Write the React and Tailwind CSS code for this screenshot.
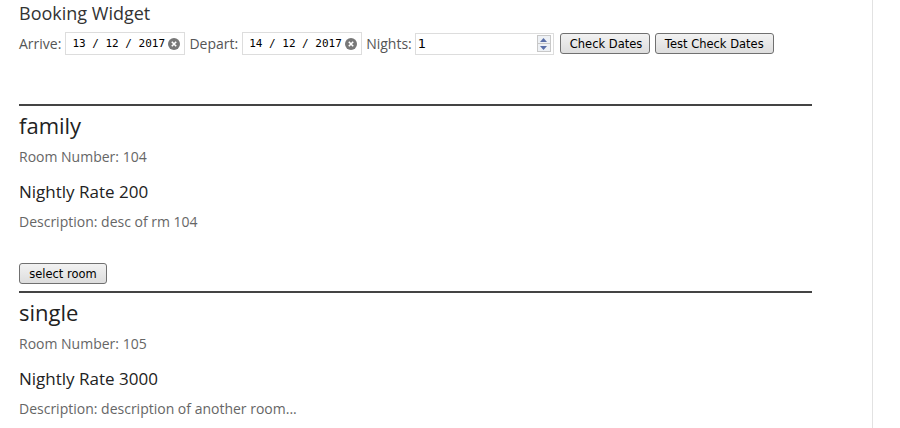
export default function App() {
  const btn =
    "h-[21px] px-[9px] pt-[2px] border border-[#707070] rounded-[3px] bg-gradient-to-b from-[#f2f2f2] to-[#dddddd] text-black leading-none whitespace-nowrap [font-family:'DejaVu_Sans',sans-serif] text-[11.5px]";
  const Clear = () => (
    <svg width="12" height="12" viewBox="0 0 12 12" className="shrink-0">
      <circle cx="6" cy="6" r="6" fill="#777" />
      <path d="M3.8 3.8 L8.2 8.2 M8.2 3.8 L3.8 8.2" stroke="#fff" strokeWidth="1.6" />
    </svg>
  );
  const DateInput = ({ v }) => (
    <div className="flex items-center h-[23px] w-[120px] border border-[#ddd] bg-white pl-[6px] pr-[5px] gap-[3px]">
      <span className="text-[11px] pt-[1px] text-black whitespace-pre [font-family:'DejaVu_Sans_Mono',monospace]">{v}</span>
      <Clear />
    </div>
  );
  const Room = ({ name, num, rate, desc, button }) => (
    <div>
      <div className="border-t-2 border-[#444] w-[793px]" />
      <div className="text-[22px] text-[#222] leading-[30px] mt-[4px]">{name}</div>
      <div className="text-[14px] text-[#666] leading-[19px] mt-[7px]">Room Number: {num}</div>
      <div className="text-[17px] text-[#222] leading-[23px] mt-[14px]">Nightly Rate {rate}</div>
      <div className="text-[14px] text-[#666] leading-[19px] mt-[9px]">Description: {desc}</div>
      {button && (
        <div className="mt-[29px] mb-[7px]">
          <button className="h-[21px] w-[88px] pt-[2px] border border-[#707070] rounded-[3px] bg-gradient-to-b from-[#f2f2f2] to-[#dddddd] text-black [font-family:'DejaVu_Sans',sans-serif] text-[11.5px] leading-none whitespace-nowrap">
            select room
          </button>
        </div>
      )}
    </div>
  );
  return (
    <div className="flex min-h-[428px] bg-white [font-family:'Open_Sans',sans-serif]">
      <div className="w-[873px] border-r border-[#e2e2e2] pl-[19px] shrink-0">
        <div className="text-[18px] text-[#333] leading-[24px] mt-[1px]">Booking Widget</div>
        <div className="flex items-center mt-[7px] h-[23px] text-[14px] text-[#555]">
          <span className="mr-[4px]">Arrive:</span>
          <DateInput v="13 / 12 / 2017" />
          <span className="ml-[4px] mr-[4px]">Depart:</span>
          <DateInput v="14 / 12 / 2017" />
          <span className="ml-[4px] mr-[3px]">Nights:</span>
          <div className="flex items-center h-[22px] w-[139px] border border-[#ddd] bg-white pl-[2px] pr-[2px]">
            <span className="flex-1 text-[13px] text-black [font-family:'DejaVu_Sans',sans-serif]">1</span>
            <div className="flex flex-col w-[14px] h-[17px] border border-[#c8c8c8] bg-[#eef1f5]">
              <div className="flex-1 flex items-center justify-center border-b border-[#c8c8c8]">
                <svg width="7" height="4" viewBox="0 0 7 4"><path d="M0 4 L3.5 0 L7 4Z" fill="#5a6fa8" /></svg>
              </div>
              <div className="flex-1 flex items-center justify-center">
                <svg width="7" height="4" viewBox="0 0 7 4"><path d="M0 0 L3.5 4 L7 0Z" fill="#5a6fa8" /></svg>
              </div>
            </div>
          </div>
          <button className={btn + " ml-[6px] w-[90px]"}>Check Dates</button>
          <button className={btn + " ml-[5px] w-[119px]"}>Test Check Dates</button>
        </div>
        <div className="mt-[49px]">
          <Room name="family" num="104" rate="200" desc="desc of rm 104" button />
          <Room name="single" num="105" rate="3000" desc="description of another room..." />
        </div>
      </div>
    </div>
  );
}
